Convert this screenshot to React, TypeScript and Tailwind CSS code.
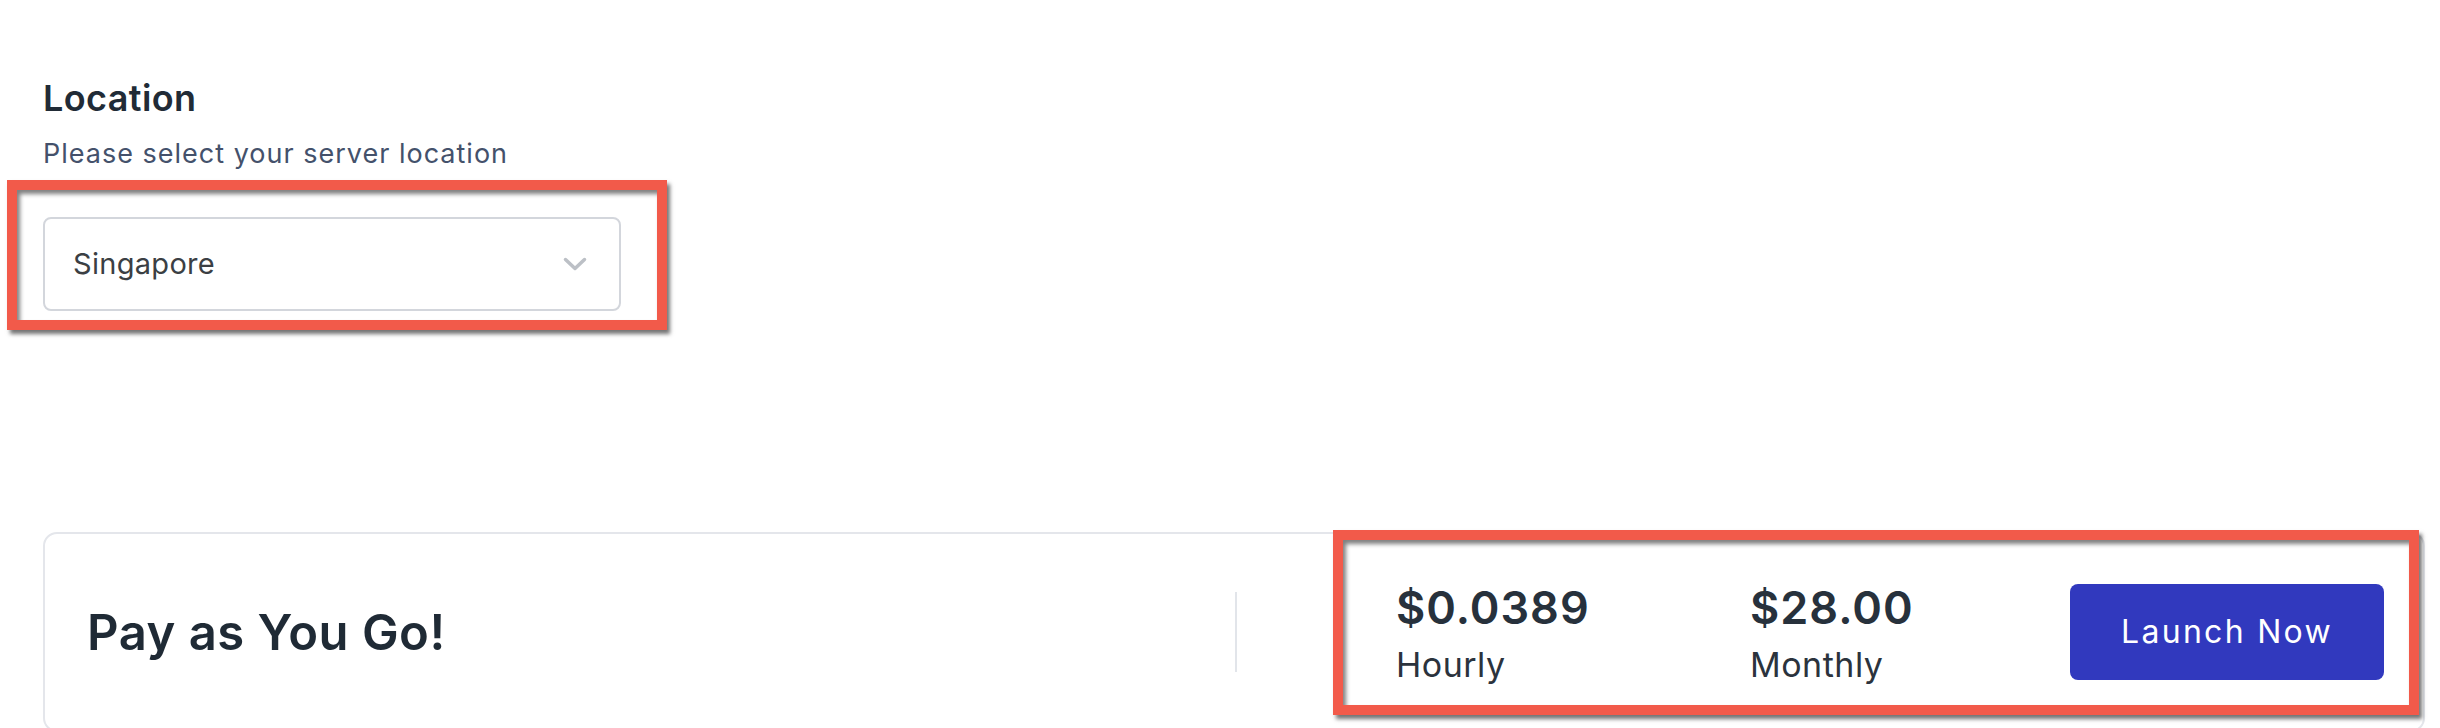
import { ReactNode } from 'react'

const font = "font-['Inter','Noto_Sans',sans-serif]"

function Annotation({ className }: { className: string }) {
  return (
    <div
      className={`pointer-events-none absolute border-[10px] border-[#f25a4a] shadow-[3px_4px_4px_rgba(0,0,0,0.55),inset_3px_4px_4px_rgba(0,0,0,0.5)] ${className}`}
    />
  )
}

function Price({ value, label }: { value: string; label: string }): ReactNode {
  return (
    <div className="flex flex-col">
      <span className="text-[45px] leading-[48px] font-semibold text-[#27313c] tracking-[1px]">{value}</span>
      <span className="mt-[13px] text-[34px] leading-[40px] text-[#2b333d] tracking-[0.5px]">{label}</span>
    </div>
  )
}

export default function App() {
  return (
    <div className={`relative w-[2440px] h-[728px] overflow-hidden bg-white ${font}`}>
      <div className="flex flex-col pl-[43px] pt-[76px] pr-[15px]">
        {/* Location picker */}
        <h2 className="text-[36px] leading-[44px] font-semibold text-[#212b36] tracking-[0.4px]">Location</h2>
        <p className="mt-[18px] text-[27px] leading-[32px] text-[#44516b] tracking-[1px]">
          Please select your server location
        </p>
        <button className="mt-[47px] flex items-center justify-between w-[578px] h-[94px] border-2 border-[#d3d6dc] rounded-[8px] pl-[28px] pr-[32px]">
          <span className="text-[29px] text-[#3b3f44] tracking-[0.3px]">Singapore</span>
          <svg width="24" height="14" viewBox="0 0 24 14" fill="none">
            <path d="M2.5 2.5l9.5 9l9.5-9" stroke="#bcc0c6" strokeWidth="3.5" strokeLinecap="round" strokeLinejoin="round" />
          </svg>
        </button>

        {/* Plan card */}
        <div className="mt-[221px] flex items-center h-[200px] w-[2382px] border-2 border-[#e4e6eb] rounded-[14px]">
          <div className="flex-1 pl-[42px]">
            <h3 className="text-[49px] leading-[56px] font-semibold text-[#1f2a35] pt-[2px] tracking-[0.5px]">Pay as You Go!</h3>
          </div>
          <div className="w-[2px] h-[80px] bg-[#e2e5ea]" />
          <div className="flex items-center pl-[159px] pr-[39px] pt-[4px]">
            <div className="w-[354px]">
              <Price value="$0.0389" label="Hourly" />
            </div>
            <div className="w-[320px]">
              <Price value="$28.00" label="Monthly" />
            </div>
            <button className="w-[314px] h-[96px] rounded-[8px] bg-[#3139be] text-white text-[32px] tracking-[2.3px] -mt-[4px]">
              Launch Now
            </button>
          </div>
        </div>
      </div>

      {/* annotation overlays */}
      <Annotation className="left-[7px] top-[180px] w-[660px] h-[150px]" />
      <Annotation className="left-[1333px] top-[530px] w-[1086px] h-[185px]" />
    </div>
  )
}
